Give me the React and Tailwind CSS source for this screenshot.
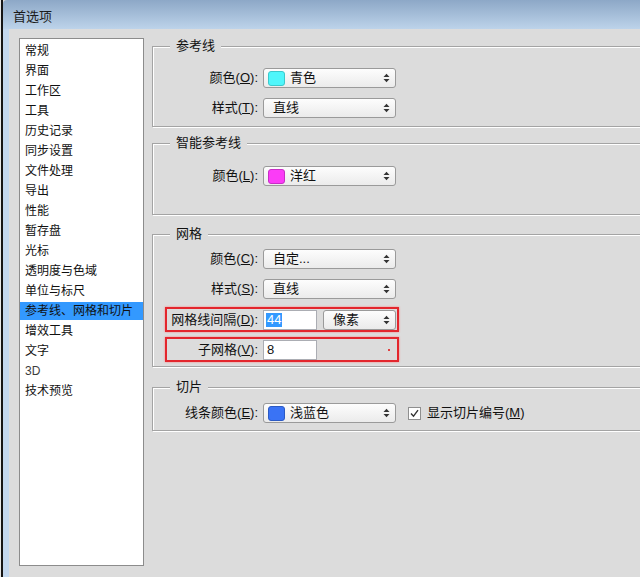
import React from "react";

const Arrows = () => (
  <svg width="7" height="10" viewBox="0 0 7 10" className="absolute right-[5px] top-1/2 -translate-y-1/2">
    <path d="M0.5 4L3.5 0.8L6.5 4Z" fill="#333" />
    <path d="M0.5 6L3.5 9.2L6.5 6Z" fill="#333" />
  </svg>
);

function Select({ className, swatch, children }) {
  return (
    <div
      className={
        "relative flex items-center h-[20px] rounded-[3px] border border-[#9a9a9a] bg-gradient-to-b from-[#fdfdfd] to-[#ebebeb] " +
        className
      }
    >
      {swatch ? (
        <>
          <span className={"ml-[4px] w-[17px] h-[15px] rounded-[3px] border " + swatch} />
          <span className="ml-[5px]">{children}</span>
        </>
      ) : (
        <span className="ml-[9px]">{children}</span>
      )}
      <Arrows />
    </div>
  );
}

function Label({ children }) {
  return <div className="w-[105px] shrink-0 text-right whitespace-nowrap">{children}</div>;
}

function Group({ title, className, children }) {
  return (
    <div
      className={
        "relative w-[520px] border border-[#a4a4a4] shadow-[inset_1px_1px_0_#ffffff,1px_1px_0_#ffffff] " +
        className
      }
    >
      <div className="absolute -top-[10px] left-[17px] px-[6px] bg-[#dcdcdc] leading-[18px]">{title}</div>
      {children}
    </div>
  );
}

const items = [
  "常规",
  "界面",
  "工作区",
  "工具",
  "历史记录",
  "同步设置",
  "文件处理",
  "导出",
  "性能",
  "暂存盘",
  "光标",
  "透明度与色域",
  "单位与标尺",
  "参考线、网格和切片",
  "增效工具",
  "文字",
  "3D",
  "技术预览",
];

export default function App() {
  return (
    <div className="w-[640px] h-[577px] flex overflow-hidden bg-[#dcdcdc] text-[#111] font-['Liberation_Sans','Noto_Sans_CJK_SC',sans-serif]">
      <div className="w-[3px] shrink-0 bg-[#151515] border-l border-[#e8e8e8]" />
      <div className="flex-1 flex flex-col">
        <div className="h-[29px] shrink-0 rounded-tl-[4px] bg-gradient-to-b from-[#8da8c7] to-[#bdd3ea] pl-[10px] pt-[8px] text-[13px] leading-[18px] text-[#1b1b1b]">
          首选项
        </div>
        <div className="flex-1 flex">
          <div className="w-[6px] shrink-0 bg-[#c3d7ee]" />
          <div className="flex-1 flex items-start pl-[10px] pt-[9px] text-[13px]">
            <div className="w-[125px] h-[528px] shrink-0 bg-white border border-[#8c8c8c] pt-[2px] text-[12px]">
              {items.map((it) => (
                <div key={it} className="h-[20px] flex items-center">
                  <div
                    className={
                      "w-full h-[18px] leading-[18px] pl-[5px] whitespace-nowrap " +
                      (it === "参考线、网格和切片"
                        ? "bg-[#3399ff] text-[#111]"
                        : it === "3D"
                        ? "text-[#3c3c3c]"
                        : "text-[#111]")
                    }
                  >
                    {it}
                  </div>
                </div>
              ))}
            </div>

            <div className="ml-[8px] mt-[8px] flex flex-col">
              <Group title="参考线" className="h-[81px] pt-[21px]">
                <div className="flex flex-col gap-[10px]">
                  <div className="flex items-center h-[20px]">
                    <Label>
                      颜色(<u>O</u>):
                    </Label>
                    <Select className="ml-[5px] w-[133px]" swatch="bg-[#4ff6fb] border-[#3bc9cc]">
                      青色
                    </Select>
                  </div>
                  <div className="flex items-center h-[20px]">
                    <Label>
                      样式(<u>T</u>):
                    </Label>
                    <Select className="ml-[5px] w-[133px]">直线</Select>
                  </div>
                </div>
              </Group>

              <Group title="智能参考线" className="mt-[16px] h-[72px] pt-[22px]">
                <div className="flex items-center h-[20px]">
                  <Label>
                    颜色(<u>L</u>):
                  </Label>
                  <Select className="ml-[5px] w-[133px]" swatch="bg-[#fb3cf7] border-[#c82ec5]">
                    洋红
                  </Select>
                </div>
              </Group>

              <Group title="网格" className="mt-[19px] h-[133px] pt-[14px]">
                <div className="flex flex-col">
                  <div className="flex items-center h-[20px]">
                    <Label>
                      颜色(<u>C</u>):
                    </Label>
                    <Select className="ml-[5px] w-[133px]">自定...</Select>
                  </div>
                  <div className="flex items-center h-[20px] mt-[10px]">
                    <Label>
                      样式(<u>S</u>):
                    </Label>
                    <Select className="ml-[5px] w-[133px]">直线</Select>
                  </div>
                  <div className="relative flex items-center h-[20px] mt-[11px]">
                    <Label>
                      网格线间隔(<u>D</u>):
                    </Label>
                    <div className="ml-[5px] w-[54px] h-[20px] bg-white border border-[#abadb3] flex items-center">
                      <span className="ml-[2px] px-[1px] bg-[#3399ff] text-white leading-[14px]">44</span>
                    </div>
                    <Select className="ml-[6px] w-[73px]">像素</Select>
                    <div className="absolute left-[12px] -top-[3px] -bottom-[2px] w-[234px] border-2 border-[#e3262d] shadow-[0_0_2px_#ff8080] pointer-events-none" />
                  </div>
                  <div className="relative flex items-center h-[20px] mt-[10px]">
                    <Label>
                      子网格(<u>V</u>):
                    </Label>
                    <div className="ml-[5px] w-[54px] h-[20px] bg-white border border-[#abadb3] flex items-center">
                      <span className="ml-[3px] leading-[14px]">8</span>
                    </div>
                    <span className="ml-[71px] w-[2px] h-[2px] bg-[#e04040]" />
                    <div className="absolute left-[12px] -top-[3px] -bottom-[2px] w-[234px] border-2 border-[#e3262d] shadow-[0_0_2px_#ff8080] pointer-events-none" />
                  </div>
                </div>
              </Group>

              <Group title="切片" className="mt-[20px] h-[44px] pt-[15px]">
                <div className="flex items-center h-[20px]">
                  <Label>
                    线条颜色(<u>E</u>):
                  </Label>
                  <Select className="ml-[5px] w-[133px]" swatch="bg-[#3a73f5] border-[#2c5ac4]">
                    浅蓝色
                  </Select>
                  <div className="ml-[12px] w-[13px] h-[13px] bg-white border border-[#8f8f8f] flex items-center justify-center">
                    <svg width="9" height="9" viewBox="0 0 9 9">
                      <path d="M1 4.5L3.5 7.2L8 1.2" fill="none" stroke="#333" strokeWidth="1.4" />
                    </svg>
                  </div>
                  <span className="ml-[6px] whitespace-nowrap">
                    显示切片编号(<u>M</u>)
                  </span>
                </div>
              </Group>
            </div>
          </div>
        </div>
      </div>
    </div>
  );
}
